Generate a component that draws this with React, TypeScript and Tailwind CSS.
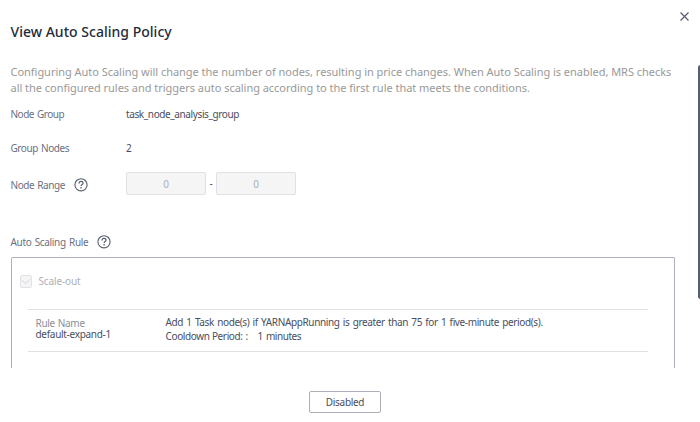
import type { ReactNode } from "react";

const HelpIcon = () => (
  <svg className="shrink-0" width="14" height="14" viewBox="0 0 14 14" fill="none" stroke="#575d6c">
    <circle cx="7" cy="6.8" r="6.1" strokeWidth="1.1" />
    <path d="M5 5.4C5 4.1 5.8 3.4 7 3.4s2 .7 2 1.8c0 1.3-1.9 1.4-1.9 2.8" strokeWidth="1.2" />
    <path d="M7.1 9.1v1.300" strokeWidth="1.3" />
  </svg>
);

const FormRow = ({
  label,
  labelClass,
  className,
  help,
  children,
}: {
  label: string;
  labelClass: string;
  className: string;
  help?: boolean;
  children?: ReactNode;
}) => (
  <div className={`flex items-center ${className}`}>
    <div className="-ml-[0.5px] flex w-[115.5px] items-center gap-[9px] text-[#6b7080]">
      <span className={`whitespace-nowrap ${labelClass}`}>{label}</span>
      {help && <HelpIcon />}
    </div>
    {children}
  </div>
);

const RangeInput = ({ value }: { value: number }) => (
  <div className="flex h-[23px] w-20 items-center justify-center rounded-[2px] border border-[#dfe1e6] bg-[#f5f5f5] text-[#adb0b8]">
    {value}
  </div>
);

const ScaleOutCheckbox = () => (
  <label className="flex h-4 items-center gap-[7px] text-[#adb0b8]">
    <span className="flex h-[13px] w-3 items-center justify-center rounded-[2px] border border-[#dfe1e6] bg-[#f5f5f5]">
      <svg className="shrink-0" width="10" height="11" viewBox="0 0 10 11" fill="none" stroke="#d2d4da">
        <path d="M.8 4 4.500 7.700 9 3.200" />
      </svg>
    </span>
    <span className="-ml-[0.5px] tracking-[-0.12px]">Scale-out</span>
  </label>
);

const ScalingRule = () => (
  <div className="mt-5 mr-[26px] ml-4 flex h-[43px] border-y border-[#dfe1e6] pl-[7.5px]">
    <div className="w-[130px] pt-2">
      <div className="h-[11px] leading-[11px] tracking-[-0.3px] text-[#8a8e99] [word-spacing:0.5px]">
        Rule Name
      </div>
      <div className="h-[11px] leading-[11px] tracking-[-0.3px]">default-expand-1</div>
    </div>
    <div className="pt-[5px] leading-[14px] whitespace-nowrap">
      <div className="tracking-[-0.37px] [word-spacing:1px]">
        Add 1 Task node(s) if YARNAppRunning is greater than 75 for 1 five-minute period(s).
      </div>
      <div className="flex">
        <span className="w-20 tracking-[-0.36px]">Cooldown Period:</span>
        <span className="w-3">:</span>
        <span className="tracking-[-0.45px] [word-spacing:1px]">1 minutes</span>
      </div>
    </div>
  </div>
);

function App() {
  return (
    <div className="relative flex h-[422px] w-[700px] flex-col overflow-hidden bg-white pl-[11px] font-['Noto_Sans','Open_Sans',sans-serif] text-[10px] leading-4 text-[#494e5c]">
      <button className="absolute top-3 right-[11px]" aria-label="Close">
        <svg width="9" height="9" viewBox="0 0 9 9" stroke="#575d6c" strokeWidth="1.2">
          <path d="M.5.5l8 8M8.5.5l-8 8" />
        </svg>
      </button>
      <div className="absolute top-[65px] right-[-3px] h-[234px] w-[5px] rounded-full bg-[#575d6c]" />

      <h1 className="mt-[22px] -ml-[0.5px] h-5 text-[14px] leading-5 font-medium tracking-[0.02px] whitespace-nowrap text-[#252b3a]">
        View Auto Scaling Policy
      </h1>
      <p className="mt-[22px] -ml-[0.5px] h-8 text-[11px] leading-4 tracking-[-0.03px] whitespace-nowrap text-[#999]">
        Configuring Auto Scaling will change the number of nodes, resulting in price changes. When Auto Scaling is enabled, MRS checks
        <br />
        all the configured rules and triggers auto scaling according to the first rule that meets the conditions.
      </p>

      <FormRow label="Node Group" labelClass="tracking-[-0.5px] [word-spacing:1px]" className="mt-[10px] h-4">
        <span className="tracking-[-0.39px]">task_node_analysis_group</span>
      </FormRow>
      <FormRow label="Group Nodes" labelClass="tracking-[-0.44px] [word-spacing:1px]" className="mt-[18px] h-4">
        2
      </FormRow>
      <FormRow
        label="Node Range"
        labelClass="tracking-[-0.45px] [word-spacing:1px]"
        className="mt-[16px] h-[23px] [&>div:first-child]:pt-[3px]"
        help
      >
        <RangeInput value={0} />
        <span className="w-[10px] pb-px text-center">-</span>
        <RangeInput value={0} />
      </FormRow>
      <FormRow
        label="Auto Scaling Rule"
        labelClass="tracking-[-0.33px] [word-spacing:1px]"
        className="mt-[39px] h-4"
        help
      />

      <div className="mt-[7px] h-[111px] w-[664px] rounded-t-[2px] border border-b-0 border-[#adb0b8] pt-[15px]">
        <div className="pl-2">
          <ScaleOutCheckbox />
        </div>
        <ScalingRule />
      </div>

      <div className="mt-[23px] -ml-[11px] flex pl-[309px]">
        <button className="h-[22px] w-[72px] rounded-[2px] border border-[#adb0b8] pb-px leading-5 tracking-[-0.3px]">
          Disabled
        </button>
      </div>
    </div>
  );
}

export default App;
